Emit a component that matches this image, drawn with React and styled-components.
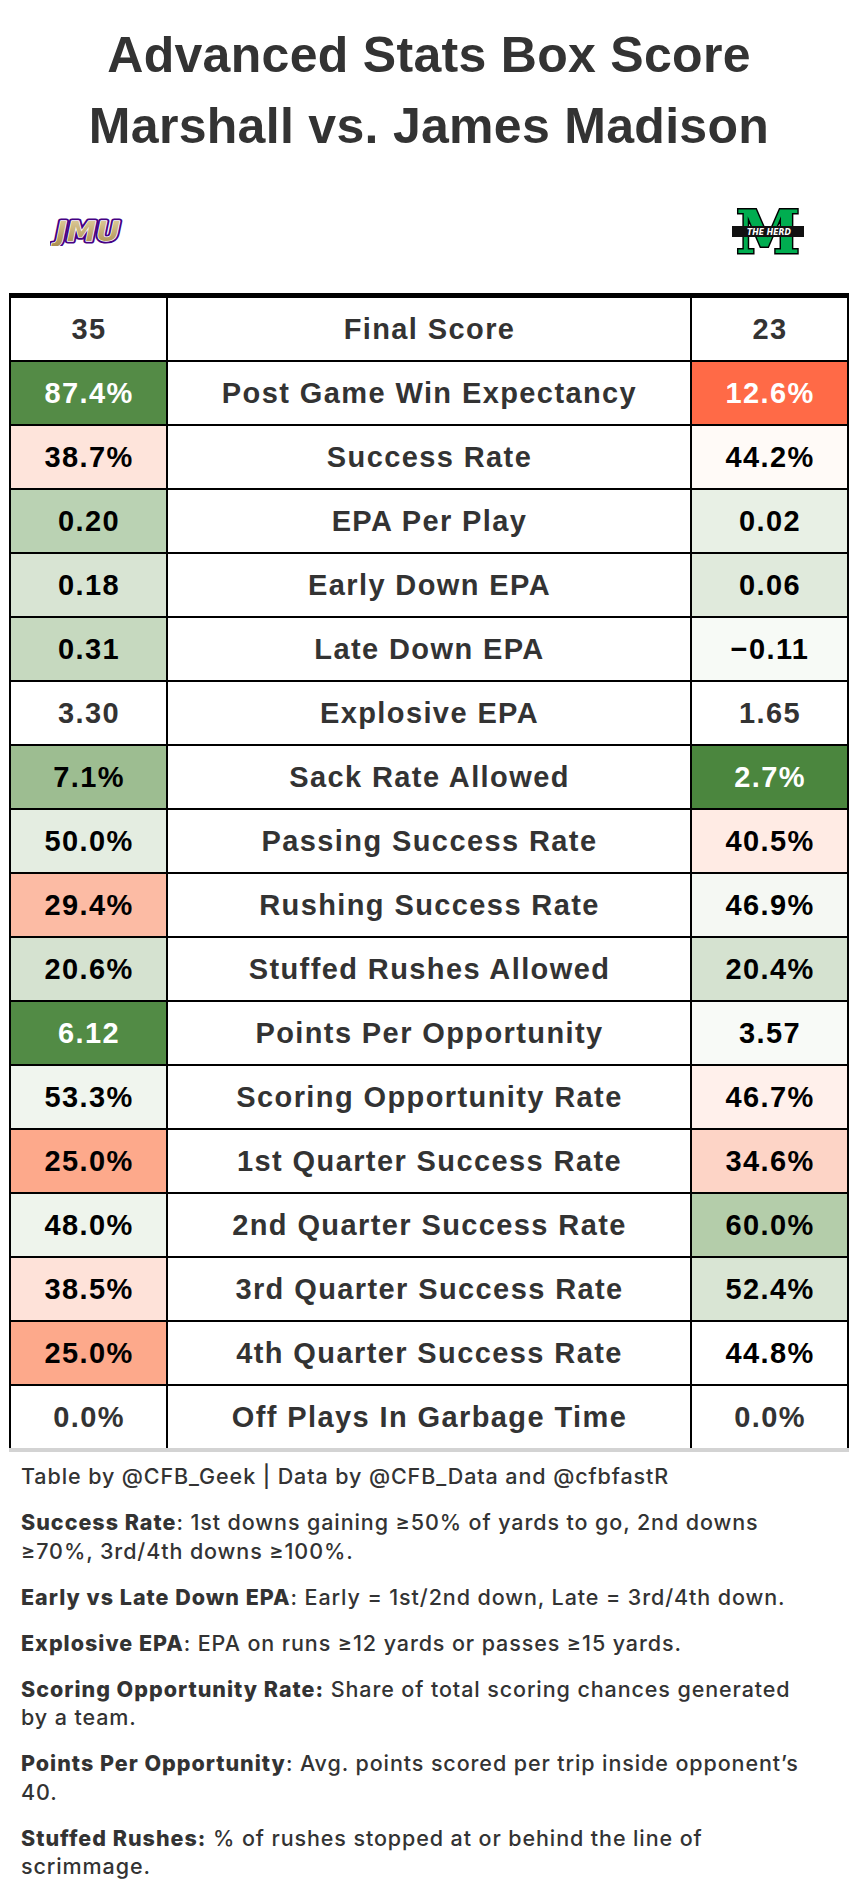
import React from 'react';
import styled, { createGlobalStyle } from 'styled-components';

const GlobalStyle = createGlobalStyle`
  html, body {
    margin: 0;
    padding: 0;
    background: #fff;
  }
  body {
    font-family: "Liberation Sans", Arial, sans-serif;
    color: #333;
  }
`;

const Page = styled.div`
  width: 858px;
  min-height: 1898px;
  background: #fff;
`;

const Title = styled.h1`
  margin: 0;
  padding-top: 20px;
  text-align: center;
  font-size: 50px;
  line-height: 71px;
  font-weight: 700;
  letter-spacing: 0.3px;
  color: #333;
`;

const LogoRow = styled.div`
  display: flex;
  justify-content: space-between;
  align-items: center;
  height: 46px;
  margin-top: 46px;
  padding: 0 53px 0 50px;
`;

const Table = styled.div`
  margin: 39px 0 0 9px;
  width: 840px;
  border-top: 5px solid #000;
`;

const Row = styled.div`
  box-sizing: border-box;
  display: grid;
  grid-template-columns: 159px 1fr 159px;
  height: 64px;
  border-bottom: 2px solid #000;
  &:last-child {
    height: 66px;
    border-bottom: 4px solid #d3d3d3;
  }
`;

const Cell = styled.div`
  display: flex;
  align-items: center;
  justify-content: center;
  padding-left: 1px;
  font-size: 29px;
  font-weight: 700;
  letter-spacing: 1.4px;
  color: #333;
  background: #fff;
`;

const ValueCell = styled(Cell)`
  border-left: 2px solid #000;
  border-right: 2px solid #000;
  background: ${p => p.$bg || '#fff'};
  color: ${p => p.$fg};
`;

const Notes = styled.div`
  padding: 10px 37px 0 21px;
  font-family: Inter, "Liberation Sans", sans-serif;
  font-size: 21.5px;
  line-height: 28.5px;
  color: #333;
`;

const Note = styled.p`
  margin: 0 0 17.5px;
  font-weight: 500;
  letter-spacing: 0.9px;
`;

const Term = styled.span`
  font-weight: 800;
  letter-spacing: 1px;
`;

const rows = [
  { l: '35', label: 'Final Score', r: '23' },
  { l: '87.4%', lb: '#548b46', label: 'Post Game Win Expectancy', r: '12.6%', rb: '#ff6a47' },
  { l: '38.7%', lb: '#fee4db', label: 'Success Rate', r: '44.2%', rb: '#fffaf7' },
  { l: '0.20', lb: '#bad2b3', label: 'EPA Per Play', r: '0.02', rb: '#e8f0e5' },
  { l: '0.18', lb: '#d8e4d3', label: 'Early Down EPA', r: '0.06', rb: '#e0eadc' },
  { l: '0.31', lb: '#c6d9bf', label: 'Late Down EPA', r: '\u22120.11', rb: '#f7faf6' },
  { l: '3.30', label: 'Explosive EPA', r: '1.65' },
  { l: '7.1%', lb: '#9dbd91', label: 'Sack Rate Allowed', r: '2.7%', rb: '#4b863e' },
  { l: '50.0%', lb: '#e4ede1', label: 'Passing Success Rate', r: '40.5%', rb: '#ffebe4' },
  { l: '29.4%', lb: '#fcbba4', label: 'Rushing Success Rate', r: '46.9%', rb: '#f5f8f3' },
  { l: '20.6%', lb: '#d5e2d0', label: 'Stuffed Rushes Allowed', r: '20.4%', rb: '#d5e2d0' },
  { l: '6.12', lb: '#528b45', label: 'Points Per Opportunity', r: '3.57', rb: '#f8faf7' },
  { l: '53.3%', lb: '#f0f5ee', label: 'Scoring Opportunity Rate', r: '46.7%', rb: '#fff0eb' },
  { l: '25.0%', lb: '#fda98b', label: '1st Quarter Success Rate', r: '34.6%', rb: '#fdd4c6' },
  { l: '48.0%', lb: '#eef4ec', label: '2nd Quarter Success Rate', r: '60.0%', rb: '#b4cdaa' },
  { l: '38.5%', lb: '#fee2d9', label: '3rd Quarter Success Rate', r: '52.4%', rb: '#d9e5d4' },
  { l: '25.0%', lb: '#fda98b', label: '4th Quarter Success Rate', r: '44.8%', rb: '#ffffff' },
  { l: '0.0%', label: 'Off Plays In Garbage Time', r: '0.0%' }
];

// text colour follows the fill, like gt's autocolor
const textFor = bg => {
  if (!bg) return '#333';
  const n = parseInt(bg.slice(1), 16);
  const lum = 0.299 * (n >> 16) + 0.587 * ((n >> 8) & 255) + 0.114 * (n & 255);
  return lum < 150 ? '#fff' : '#000';
};

const JmuLogo = () => (
  <svg width="76" height="30" viewBox="0 0 76 30">
    <defs>
      <linearGradient id="jmuGold" x1="0" y1="0" x2="0" y2="1">
        <stop offset="0" stopColor="#e0cf9e" />
        <stop offset="1" stopColor="#a98c4c" />
      </linearGradient>
    </defs>
    <text x="38" y="25" textAnchor="middle" fontFamily="DejaVu Sans" fontWeight="bold" fontStyle="italic"
      fontSize="26" textLength="64" lengthAdjust="spacingAndGlyphs" fill="#450084" stroke="#450084"
      strokeWidth="5" strokeLinejoin="round">JMU</text>
    <text x="38" y="25" textAnchor="middle" fontFamily="DejaVu Sans" fontWeight="bold" fontStyle="italic"
      fontSize="26" textLength="64" lengthAdjust="spacingAndGlyphs" fill="url(#jmuGold)" stroke="#fff"
      strokeWidth="1.4" paintOrder="stroke" strokeLinejoin="round">JMU</text>
  </svg>
);

const HerdLogo = () => (
  <svg width="74" height="48" viewBox="0 0 74 48">
    <text x="37" y="46" textAnchor="middle" fontFamily="DejaVu Serif" fontWeight="bold" fontSize="60"
      textLength="64" lengthAdjust="spacingAndGlyphs" fill="#00ad50" stroke="#000" strokeWidth="3"
      paintOrder="stroke" strokeLinejoin="miter">M</text>
    <rect x="1" y="19" width="72" height="11" fill="#111" />
    <text x="38" y="28" textAnchor="middle" fontFamily="DejaVu Sans" fontWeight="bold" fontStyle="italic"
      fontSize="9" textLength="44" lengthAdjust="spacingAndGlyphs" fill="#fff">THE HERD</text>
  </svg>
);

const App = () => {
  return (
    <Page>
      <GlobalStyle />
      <Title>
        Advanced Stats Box Score
        <br />
        Marshall vs. James Madison
      </Title>
      <LogoRow>
        <JmuLogo />
        <HerdLogo />
      </LogoRow>
      <Table>
        {rows.map(row => (
          <Row key={row.label}>
            <ValueCell $bg={row.lb} $fg={textFor(row.lb)}>{row.l}</ValueCell>
            <Cell>{row.label}</Cell>
            <ValueCell $bg={row.rb} $fg={textFor(row.rb)}>{row.r}</ValueCell>
          </Row>
        ))}
      </Table>
      <Notes>
        <Note>Table by @CFB_Geek | Data by @CFB_Data and @cfbfastR</Note>
        <Note>
          <Term>Success Rate</Term>: 1st downs gaining ≥50% of yards to go, 2nd downs ≥70%, 3rd/4th downs ≥100%.
        </Note>
        <Note>
          <Term>Early vs Late Down EPA</Term>: Early = 1st/2nd down, Late = 3rd/4th down.
        </Note>
        <Note>
          <Term>Explosive EPA</Term>: EPA on runs ≥12 yards or passes ≥15 yards.
        </Note>
        <Note>
          <Term>Scoring Opportunity Rate:</Term> Share of total scoring chances generated by a team.
        </Note>
        <Note>
          <Term>Points Per Opportunity</Term>: Avg. points scored per trip inside opponent’s 40.
        </Note>
        <Note>
          <Term>Stuffed Rushes:</Term> % of rushes stopped at or behind the line of scrimmage.
        </Note>
      </Notes>
    </Page>
  );
};

export default App;
